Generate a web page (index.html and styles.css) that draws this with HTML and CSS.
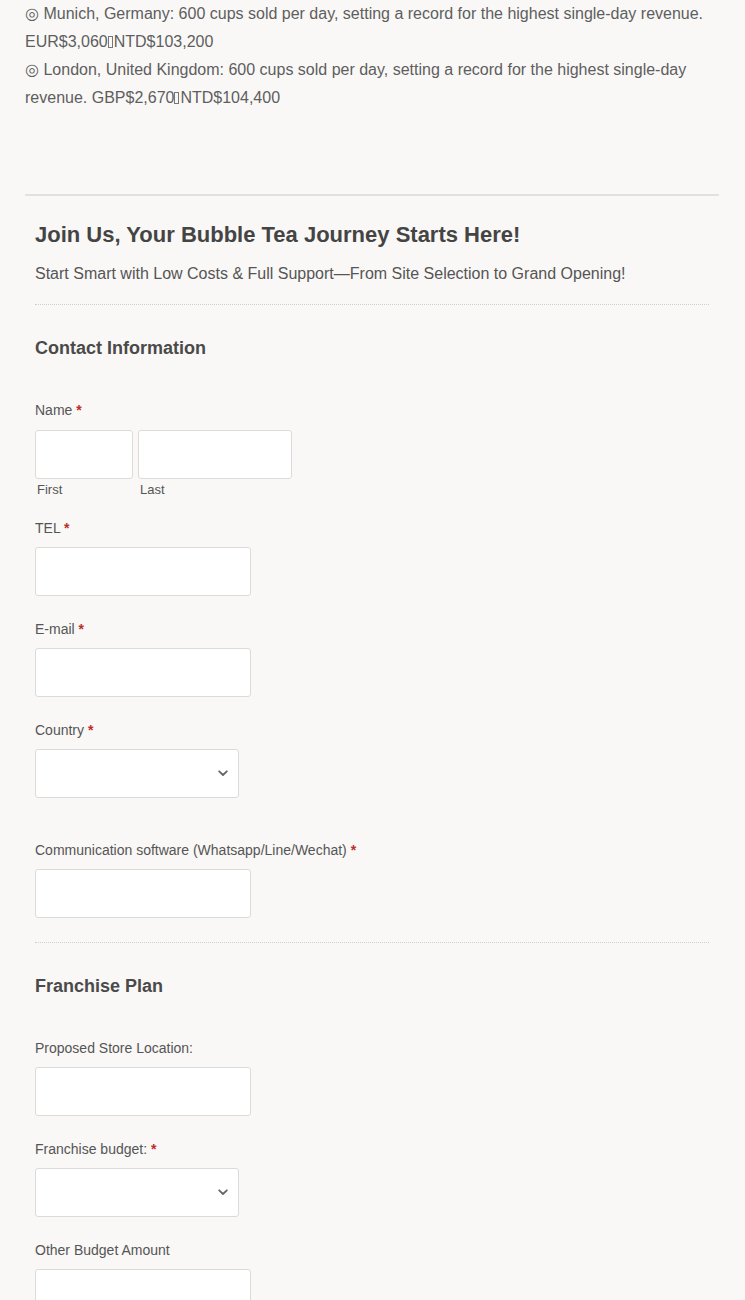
FILE: index.html
```html
<!DOCTYPE html>
<html lang="en">
<head>
<meta charset="utf-8">
<title>Join Us</title>
<link rel="stylesheet" href="styles.css">
</head>
<body>
<div class="page">
  <div class="records">
    <p>◎ Munich, Germany: 600 cups sold per day, setting a record for the highest single-day revenue. <span class="nw">EUR$3,060<span class="tofu"></span>NTD$103,200</span></p>
    <p>◎ London, United Kingdom: 600 cups sold per day, setting a record for the highest single-day <span class="nw">revenue. GBP$2,670<span class="tofu"></span>NTD$104,400</span></p>
  </div>
  <div class="rule"></div>
  <form class="form">
    <div class="form-head">
      <h2>Join Us, Your Bubble Tea Journey Starts Here!</h2>
      <p>Start Smart with Low Costs &amp; Full Support—From Site Selection to Grand Opening!</p>
    </div>

    <h3 class="section-title">Contact Information</h3>

    <div class="field field-first">
      <label class="label label-name">Name <span class="req">*</span></label>
      <div class="name-row">
        <div class="name-part">
          <input class="input input-first" type="text">
          <span class="sublabel">First</span>
        </div>
        <div class="name-part">
          <input class="input input-last" type="text">
          <span class="sublabel">Last</span>
        </div>
      </div>
    </div>

    <div class="field field-tel">
      <label class="label">TEL <span class="req">*</span></label>
      <input class="input input-md" type="text">
    </div>

    <div class="field">
      <label class="label">E-mail <span class="req">*</span></label>
      <input class="input input-md" type="text">
    </div>

    <div class="field">
      <label class="label">Country <span class="req">*</span></label>
      <div class="select-wrap">
        <select class="select"><option></option></select>
        <svg class="chev" width="10" height="7" viewBox="0 0 10 7"><path d="M1.2 1.3 L5 5 L8.8 1.3" fill="none" stroke="#666" stroke-width="1.8" stroke-linecap="round" stroke-linejoin="round"/></svg>
      </div>
    </div>

    <div class="field field-gap">
      <label class="label">Communication software (Whatsapp/Line/Wechat) <span class="req">*</span></label>
      <input class="input input-md" type="text">
    </div>

    <div class="dotted"></div>

    <h3 class="section-title">Franchise Plan</h3>

    <div class="field field-first">
      <label class="label">Proposed Store Location:</label>
      <input class="input input-md" type="text">
    </div>

    <div class="field">
      <label class="label">Franchise budget: <span class="req">*</span></label>
      <div class="select-wrap">
        <select class="select"><option></option></select>
        <svg class="chev" width="10" height="7" viewBox="0 0 10 7"><path d="M1.2 1.3 L5 5 L8.8 1.3" fill="none" stroke="#666" stroke-width="1.8" stroke-linecap="round" stroke-linejoin="round"/></svg>
      </div>
    </div>

    <div class="field">
      <label class="label">Other Budget Amount</label>
      <input class="input input-md" type="text">
    </div>
  </form>
</div>
</body>
</html>
```
FILE: styles.css
```css
* { box-sizing: border-box; }
html, body {
  margin: 0;
  padding: 0;
  background: #f9f8f6;
}
body {
  font-family: "Liberation Sans", Arial, sans-serif;
  color: #555;
}
.page {
  padding: 0 26px 0 25px;
}
.records p {
  margin: 0;
  font-size: 16px;
  line-height: 28px;
  color: #5e5e5e;
}
.nw {
  white-space: nowrap;
}
.tofu {
  display: inline-block;
  width: 5px;
  height: 12px;
  border: 1px solid #777;
  margin: 0 1px 0 0;
  vertical-align: -1px;
}
.rule {
  margin-top: 82px;
  border-top: 2px solid #e2e1df;
}
.form {
  padding: 0 10px;
}
.form-head {
  padding-top: 26px;
  padding-bottom: 20px;
  border-bottom: 1px dotted #cfcfcf;
}
.form-head h2 {
  margin: 0;
  font-size: 22px;
  line-height: 26px;
  font-weight: bold;
  color: #444;
}
.form-head p {
  margin: 16px 0 0;
  font-size: 16px;
  line-height: 20px;
  color: #555;
}
.section-title {
  margin: 32px 0 0;
  font-size: 18px;
  line-height: 22px;
  font-weight: bold;
  color: #4a4a4a;
}
.field {
  margin-top: 24px;
}
.field-first {
  margin-top: 42px;
}
.field-tel {
  margin-top: 21px;
}
.field-gap {
  margin-top: 43px;
}
.label {
  display: block;
  font-size: 14px;
  line-height: 18px;
  margin-bottom: 10px;
  color: #555;
}
.label-name {
  margin-bottom: 11px;
}
.req {
  color: #c02b2b;
  font-weight: bold;
}
.input, .select {
  display: block;
  height: 49px;
  border: 1px solid #dcdbd9;
  border-radius: 3px;
  background: #fff;
  font-family: inherit;
  font-size: 14px;
  padding: 0 10px;
  margin: 0;
  outline: none;
}
.input-md { width: 216px; }
.name-row {
  display: flex;
  gap: 5px;
}
.name-part {
  display: flex;
  flex-direction: column;
}
.input-first { width: 98px; }
.input-last { width: 154px; }
.sublabel {
  display: block;
  margin-top: 3px;
  margin-left: 2px;
  font-size: 13px;
  line-height: 16px;
  color: #555;
}
.select-wrap {
  position: relative;
  width: 204px;
}
.select {
  width: 204px;
  appearance: none;
  -webkit-appearance: none;
}
.chev {
  position: absolute;
  right: 11px;
  top: 21px;
  pointer-events: none;
}
.dotted {
  margin-top: 24px;
  border-top: 1px dotted #cfcfcf;
}
```
